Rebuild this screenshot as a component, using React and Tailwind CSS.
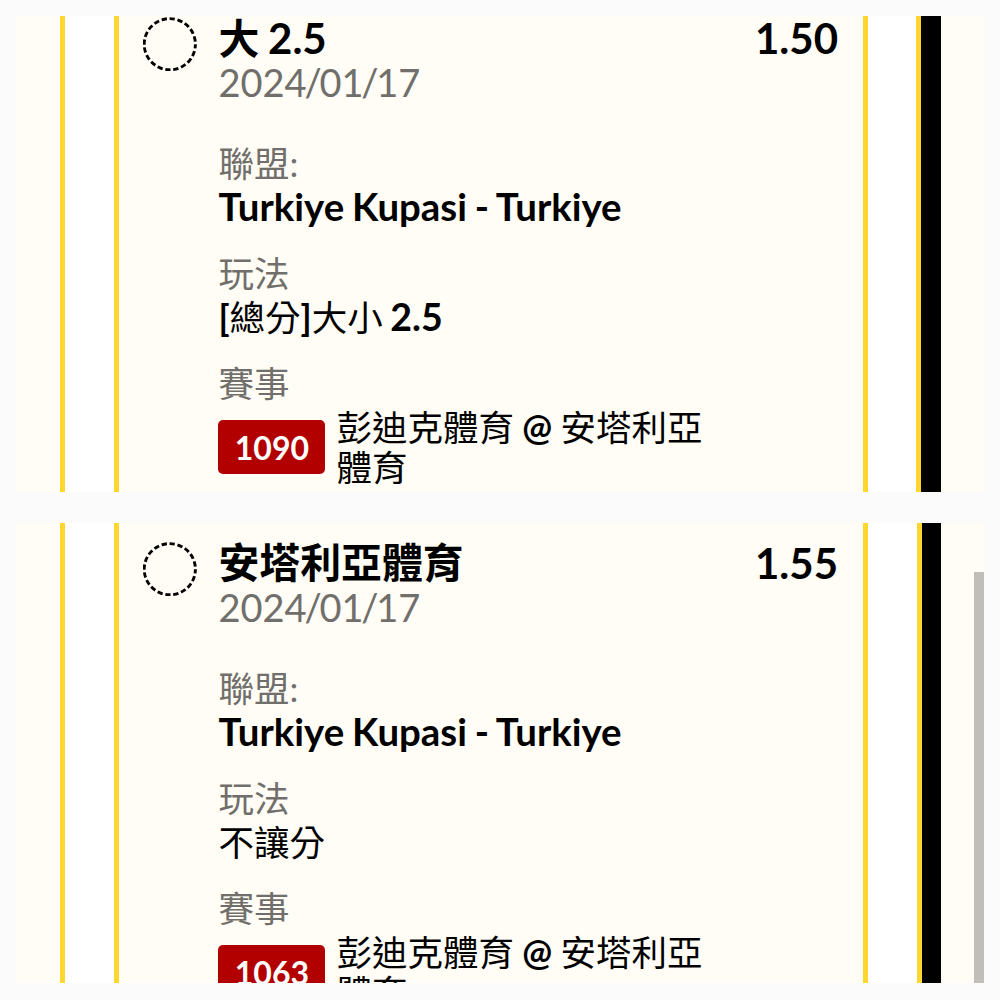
import React from 'react';
import clsx from 'clsx';

const bets = [
    {
        pick: '大',
        pickLine: '2.5',
        odds: '1.50',
        date: ['2024', '01', '17'],
        league: 'Turkiye Kupasi - Turkiye',
        market: (
            <>
                <b>[</b>總分<b>]</b>大小
            </>
        ),
        line: '2.5',
        code: '1090',
        away: '彭迪克體育',
        home: '安塔利亞體育',
    },
    {
        pick: '安塔利亞體育',
        odds: '1.55',
        date: ['2024', '01', '17'],
        league: 'Turkiye Kupasi - Turkiye',
        market: '不讓分',
        code: '1063',
        away: '彭迪克體育',
        home: '安塔利亞體育',
    },
];

const Label = ({ children }) => (
    <div className="h-[44px] leading-[44px] text-[35.5px] text-[#706f6b]">{children}</div>
);

const BetDate = ({ parts }) => (
    <div className="h-[44px] leading-[44px] text-[38px] text-[#706f6b]">
        {parts[0]}
        <span className="mx-[-2.2px]">/</span>
        {parts[1]}
        <span className="mx-[-2.2px]">/</span>
        {parts[2]}
    </div>
);

const BetDetails = ({ bet }) => (
    <div className="flex-1 min-w-0 pr-[25px]">
        <div className="flex h-[44px] justify-between whitespace-nowrap font-bold leading-[44px]">
            <span className="text-[40.9px]">
                {bet.pick}
                {bet.pickLine && <span className="text-[42px] [word-spacing:-1.5px]"> {bet.pickLine}</span>}
            </span>
            <span className="text-[42px]">{bet.odds}</span>
        </div>
        <BetDate parts={bet.date} />

        <div className="mt-[38px]">
            <Label>聯盟:</Label>
            <div className="h-[44px] whitespace-nowrap leading-[41px] text-[38.4px] font-bold [word-spacing:-1.5px]">
                {bet.league}
            </div>
        </div>

        <div className="mt-[22px]">
            <Label>玩法</Label>
            <div className={clsx('h-[44px] whitespace-nowrap text-[35.5px]', bet.line ? 'leading-[41px]' : 'leading-[44px]')}>
                {bet.market}
                {bet.line && <span className="text-[37.5px] font-bold [word-spacing:-1.5px]"> {bet.line}</span>}
            </div>
        </div>

        <div className="mt-[22px]">
            <Label>賽事</Label>
            <div className="flex items-start pt-[2px]">
                <span className="mt-[12px] flex h-[54px] w-[107px] shrink-0 items-center justify-center rounded-[5px] bg-[#b20000] pt-px text-[32px] font-bold text-white">
                    {bet.code}
                </span>
                <span className="ml-[11px] w-[375px] leading-[40px] text-[35.5px] [word-spacing:-0.8px]">
                    {bet.away} <b className="font-bold">@</b> {bet.home}
                </span>
            </div>
        </div>
    </div>
);

const BetPanel = ({ bet, className, first }) => (
    <section className={clsx('flex overflow-hidden bg-[#fffdf5]', className)}>
        <div className="w-[44px] shrink-0" />
        <div className="w-[59px] shrink-0 border-x-[5px] border-[#fdd62f] bg-white" />
        <div className={clsx('flex w-[744px] shrink-0 pl-[24px]', !first && 'pt-[18px]')}>
            <svg className="mt-px size-[54px] shrink-0" viewBox="0 0 54 54" fill="none">
                <circle cx="26.8" cy="27.2" r="25.6" stroke="#000" strokeWidth="2.9" strokeDasharray="5.3 2.742" strokeDashoffset="1" />
            </svg>
            <div className="w-[21.4px] shrink-0" />
            <BetDetails bet={bet} />
        </div>
        <div className={clsx('shrink-0 border-x-[5px] border-[#fdd62f] bg-white', first ? 'w-[58px]' : 'w-[59px]')} />
        <div className={clsx('shrink-0 bg-black', first ? 'w-[20px]' : 'w-[19px]')} />
        <div className="flex flex-1 justify-end">
            {!first && <div className="mt-[49px] w-[10px] bg-[#bfbeb8]" />}
        </div>
    </section>
);

export default function App() {
    return (
        <main className="h-[1000px] w-[1000px] overflow-hidden bg-[#fbfbfb] px-[16px] pt-[16px] font-['Lato','Noto_Sans_CJK_TC',sans-serif] text-black">
            <BetPanel bet={bets[0]} className="h-[476px]" first />
            <BetPanel bet={bets[1]} className="mt-[31px] h-[460px]" />
        </main>
    );
}
